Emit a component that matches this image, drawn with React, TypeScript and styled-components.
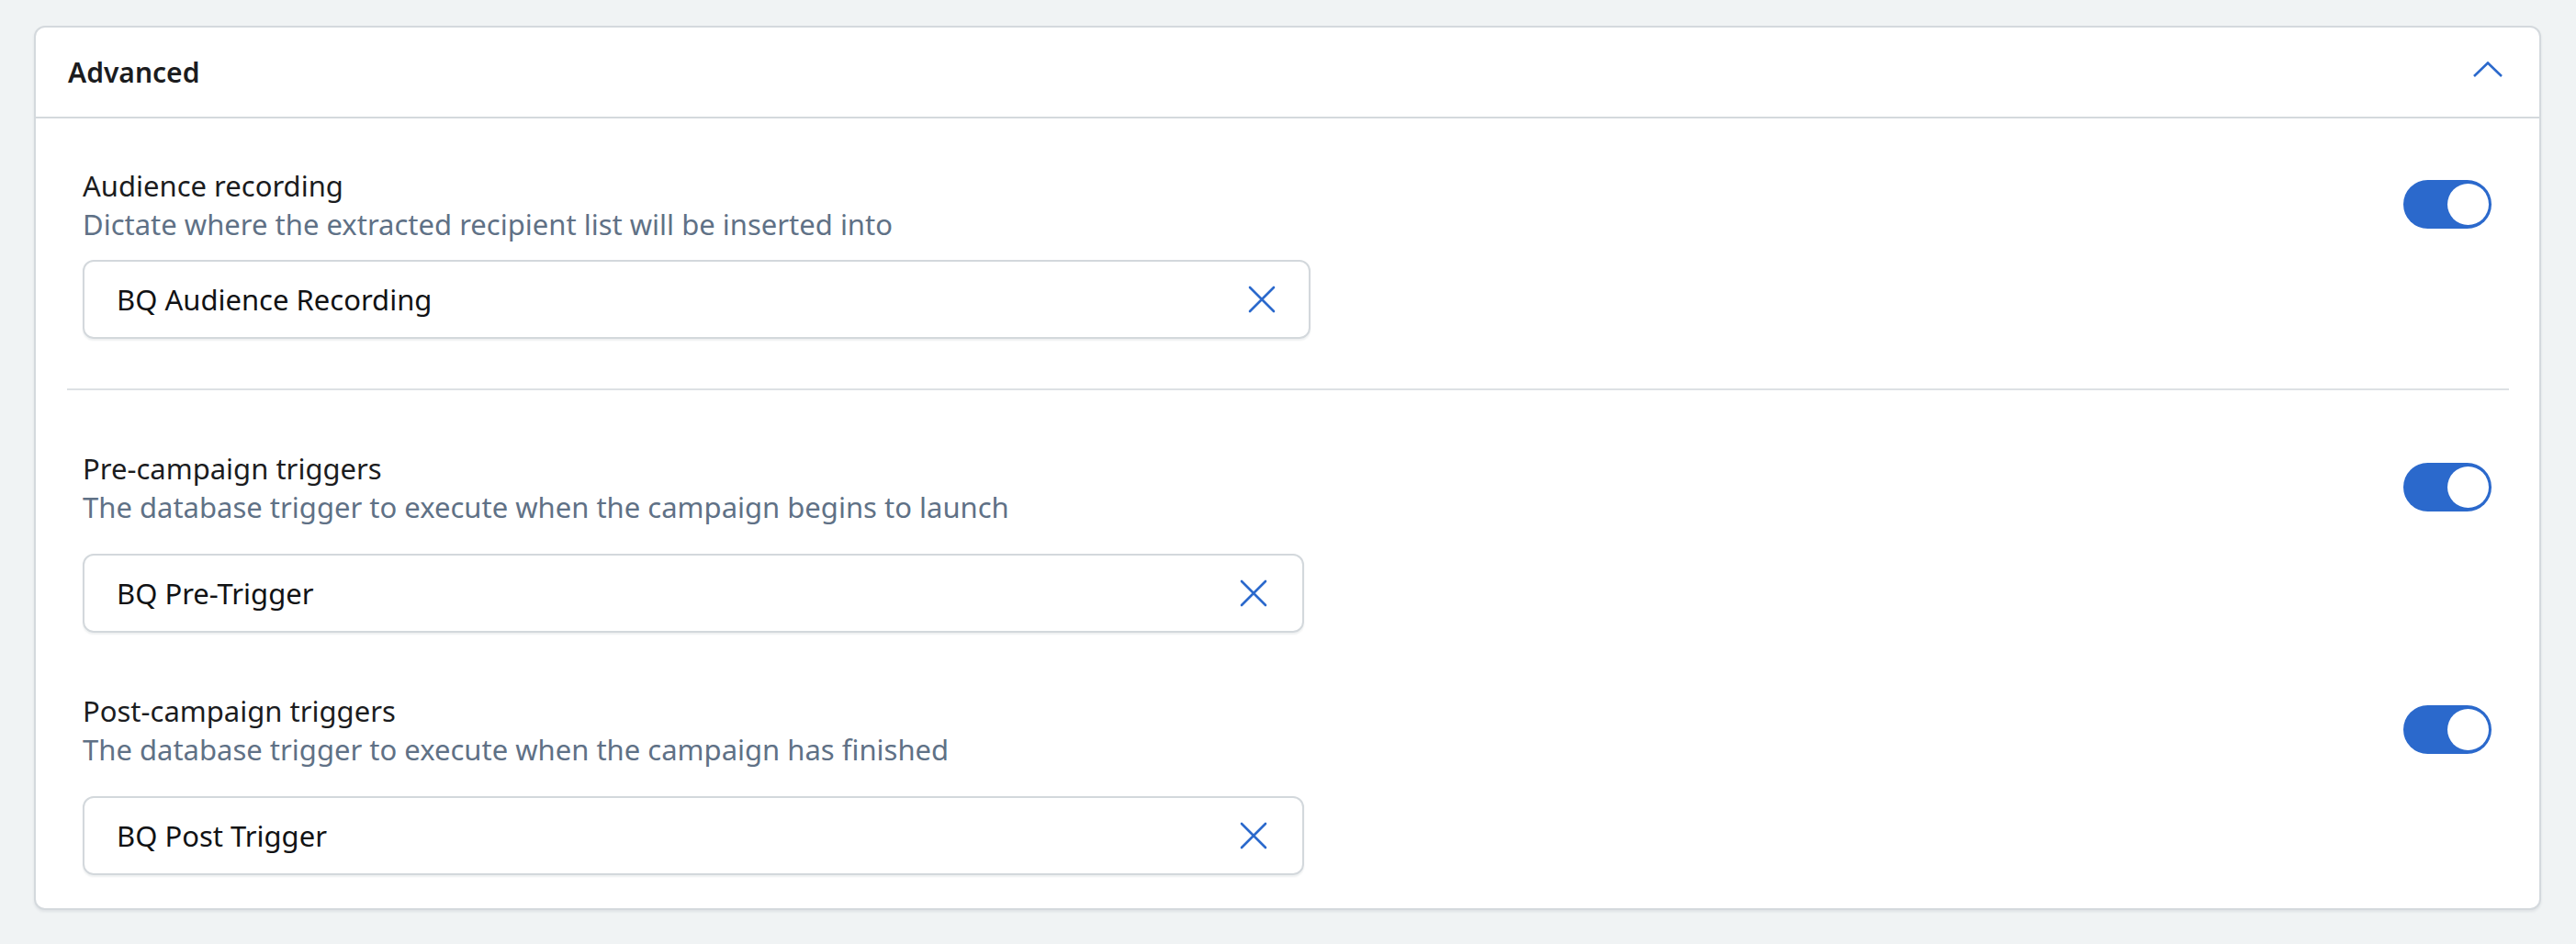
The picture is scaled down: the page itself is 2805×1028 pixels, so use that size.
import styled, { createGlobalStyle } from "styled-components"

const GlobalStyle = createGlobalStyle`
	body {
		margin: 0;
		background: #f0f3f4;
		font-family: "Noto Sans", "Open Sans", sans-serif;
		color: #1b1c1e;
	}
`

type Field = {
	title: string
	description: string
	value: string
	enabled: boolean
}

const audienceField: Field = {
	title: "Audience recording",
	description: "Dictate where the extracted recipient list will be inserted into",
	value: "BQ Audience Recording",
	enabled: true
}

const triggerFields: Field[] = [
	{
		title: "Pre-campaign triggers",
		description: "The database trigger to execute when the campaign begins to launch",
		value: "BQ Pre-Trigger",
		enabled: true
	},
	{
		title: "Post-campaign triggers",
		description: "The database trigger to execute when the campaign has finished",
		value: "BQ Post Trigger",
		enabled: true
	}
]

function ChevronUp() {
	return (
		<svg width="32" height="17" viewBox="0 0 32 17" fill="none">
			<polyline
				points="1,16 16,1.5 31,16"
				stroke="#2b69cc"
				strokeWidth="2.6"
			/>
		</svg>
	)
}

function ClearIcon() {
	return (
		<svg width="30" height="30" viewBox="0 0 30 30" fill="none">
			<path
				d="M2 2 L28 28 M28 2 L2 28"
				stroke="#2b69cc"
				strokeWidth="2.6"
				strokeLinecap="round"
			/>
		</svg>
	)
}

type FieldRowProps = {
	field: Field
	inputGap: number
	inputWidth: number
	clearOffset: number
}

function FieldRow({ field, inputGap, inputWidth, clearOffset }: FieldRowProps) {
	return (
		<Row>
			<RowText>
				<Title>{field.title}</Title>
				<Description>{field.description}</Description>
				<Input $gap={inputGap} $width={inputWidth} $clearOffset={clearOffset}>
					<span>{field.value}</span>
					<ClearButton aria-label="Clear">
						<ClearIcon />
					</ClearButton>
				</Input>
			</RowText>
			<Toggle $on={field.enabled} aria-pressed={field.enabled}>
				<Knob />
			</Toggle>
		</Row>
	)
}

export default function App() {
	return (
		<>
			<GlobalStyle />
			<Card>
				<Header>
					<HeaderTitle>Advanced</HeaderTitle>
					<ChevronUp />
				</Header>
				<Body>
					<Group $top={52} $bottom={54}>
						<FieldRow
							field={audienceField}
							inputGap={18}
							inputWidth={1337}
							clearOffset={36}
						/>
					</Group>
					<Separator />
					<Group $top={64} $bottom={36}>
						{triggerFields.map((f) => (
							<FieldRow
								key={f.title}
								field={f}
								inputGap={30}
								inputWidth={1330}
								clearOffset={38}
							/>
						))}
					</Group>
				</Body>
			</Card>
		</>
	)
}

const Card = styled.section`
	box-sizing: border-box;
	width: 2730px;
	margin: 28px 0 40px 37px;
	background: #ffffff;
	border: 2px solid #d4d9dd;
	border-radius: 12px;
	box-shadow: 0 2px 3px rgba(20, 40, 60, 0.08);
`

const Header = styled.header`
	display: flex;
	align-items: center;
	justify-content: space-between;
	box-sizing: border-box;
	height: 99px;
	padding: 0 40px 6px 35px;
	border-bottom: 2px solid #d4d9dd;
`

const HeaderTitle = styled.h2`
	margin: 6px 0 0;
	font-size: 30px;
	font-weight: 600;
	color: #1b1c1e;
`

const Body = styled.div`
	padding: 0 33px 0 34px;
`

const Group = styled.div<{ $top: number; $bottom: number }>`
	display: flex;
	flex-direction: column;
	gap: 64px;
	padding: ${(p) => p.$top}px 19px ${(p) => p.$bottom}px 17px;
`

const Separator = styled.hr`
	margin: 0;
	border: none;
	height: 2px;
	background: #dde1e4;
`

const Row = styled.div`
	display: flex;
	align-items: flex-start;
	justify-content: space-between;
`

const RowText = styled.div`
	display: flex;
	flex-direction: column;
`

const Title = styled.div`
	font-size: 31px;
	line-height: 42px;
	color: #1b1c1e;
`

const Description = styled.div`
	font-size: 31px;
	line-height: 42px;
	color: #5f7186;
`

const Input = styled.div<{ $gap: number; $width: number; $clearOffset: number }>`
	box-sizing: border-box;
	display: flex;
	align-items: center;
	justify-content: space-between;
	width: ${(p) => p.$width}px;
	height: 86px;
	margin-top: ${(p) => p.$gap}px;
	padding: 0 ${(p) => p.$clearOffset}px 0 35px;
	border: 2px solid #d3d8dc;
	border-radius: 12px;
	box-shadow: 0 2px 2px rgba(20, 40, 60, 0.07);
	font-size: 31px;
	color: #111214;
`

const ClearButton = styled.button`
	display: flex;
	padding: 0;
	border: none;
	background: none;
	cursor: pointer;
`

const Toggle = styled.button<{ $on: boolean }>`
	display: flex;
	align-items: center;
	justify-content: ${(p) => (p.$on ? "flex-end" : "flex-start")};
	box-sizing: border-box;
	width: 96px;
	height: 53px;
	margin-top: 15px;
	padding: 0 3px;
	border: none;
	border-radius: 27px;
	background: ${(p) => (p.$on ? "#2b69cc" : "#c5cbd1")};
	cursor: pointer;
`

const Knob = styled.span`
	width: 45px;
	height: 45px;
	border-radius: 50%;
	background: #ffffff;
`
